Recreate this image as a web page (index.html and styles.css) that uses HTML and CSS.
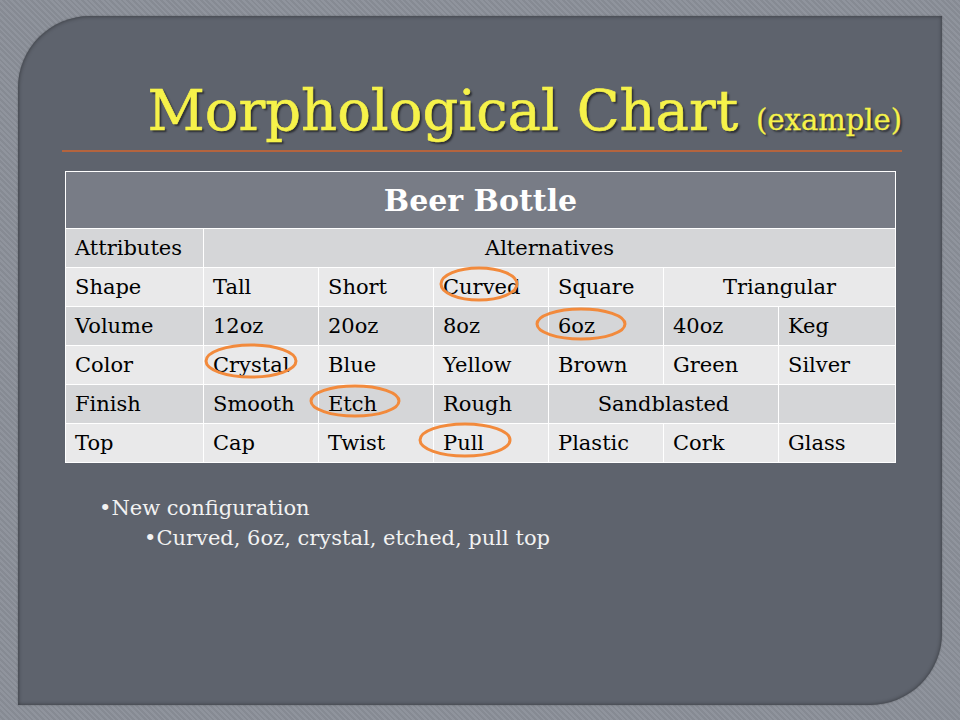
FILE: index.html
```html
<!DOCTYPE html>
<html>
<head>
<meta charset="utf-8">
<link rel="stylesheet" href="styles.css">
</head>
<body>
<div class="slide">
  <h1 class="title">Morphological Chart <span class="sub">(example)</span></h1>
  <div class="rule"></div>
  <div class="table-wrap">
    <table class="chart">
      <colgroup>
        <col class="c1"><col class="cn"><col class="cn"><col class="cn"><col class="cn"><col class="cn"><col class="cl">
      </colgroup>
      <tr class="head"><th colspan="7">Beer Bottle</th></tr>
      <tr class="dark"><td>Attributes</td><td colspan="6" class="center">Alternatives</td></tr>
      <tr class="light"><td>Shape</td><td>Tall</td><td>Short</td><td>Curved</td><td>Square</td><td colspan="2" class="center">Triangular</td></tr>
      <tr class="dark"><td>Volume</td><td>12oz</td><td>20oz</td><td>8oz</td><td>6oz</td><td>40oz</td><td>Keg</td></tr>
      <tr class="light"><td>Color</td><td>Crystal</td><td>Blue</td><td>Yellow</td><td>Brown</td><td>Green</td><td>Silver</td></tr>
      <tr class="dark"><td>Finish</td><td>Smooth</td><td>Etch</td><td>Rough</td><td colspan="2" class="center">Sandblasted</td><td></td></tr>
      <tr class="light"><td>Top</td><td>Cap</td><td>Twist</td><td>Pull</td><td>Plastic</td><td>Cork</td><td>Glass</td></tr>
    </table>
    <svg class="marks" width="830" height="290" viewBox="0 0 830 290">
      <g fill="none" stroke="#f28a3c" stroke-width="3">
        <ellipse cx="414" cy="113" rx="38" ry="16"/>
        <ellipse cx="516" cy="153" rx="44" ry="15"/>
        <ellipse cx="186" cy="190" rx="45" ry="16"/>
        <ellipse cx="290" cy="230" rx="44" ry="15"/>
        <ellipse cx="400" cy="269" rx="45" ry="16"/>
      </g>
    </svg>
  </div>
  <ul class="bullets">
    <li>•New configuration</li>
    <li class="lvl2">•Curved, 6oz, crystal, etched, pull top</li>
  </ul>
</div>
</body>
</html>
```
FILE: styles.css
```css
html, body {
  margin: 0;
  padding: 0;
}
body {
  width: 960px;
  height: 720px;
  background-color: #8b9099;
  background-image: repeating-linear-gradient(45deg, rgba(255,255,255,0.04) 0 2px, rgba(0,0,0,0.04) 2px 4px);
  overflow: hidden;
  font-family: "DejaVu Serif", "Liberation Serif", serif;
}
.slide {
  box-sizing: border-box;
  margin: 16px 18px 0 18px;
  width: 924px;
  height: 689px;
  background: #5e636d;
  border-radius: 72px 0 72px 0;
  box-shadow: inset 0 0 4px rgba(0,0,0,0.45), 0 0 2px rgba(0,0,0,0.3);
  padding: 62px 40px 0 44px;
  display: flex;
  flex-direction: column;
}
.title {
  margin: 0;
  text-align: right;
  font-weight: normal;
  font-size: 56px;
  line-height: 66px;
  color: #f6f24a;
  -webkit-text-stroke: 0.6px #f6f24a;
  text-shadow: 2px 2px 2px rgba(0,0,0,0.55);
  white-space: nowrap;
}
.title .sub {
  font-size: 29px;
  line-height: 1;
  -webkit-text-stroke: 0.3px #f6f24a;
}
.rule {
  margin-top: 6px;
  height: 2px;
  background: #b4643e;
}
.table-wrap {
  position: relative;
  margin: 19px 7px 0 3px;
  width: 830px;
}
.chart {
  border-collapse: collapse;
  width: 830px;
  table-layout: fixed;
  font-size: 21px;
  color: #000;
}
.chart col.c1 { width: 138px; }
.chart col.cn { width: 115px; }
.chart col.cl { width: 117px; }
.chart th, .chart td {
  border: 1px solid #ffffff;
  padding: 0 0 0 9px;
  text-align: left;
  white-space: nowrap;
  overflow: visible;
}
.chart .head th {
  height: 56px;
  background: #787c86;
  color: #ffffff;
  font-size: 30px;
  font-weight: bold;
  text-align: center;
  padding: 0;
}
.chart tr.dark td { background: #d5d6d8; height: 38px; }
.chart tr.light td { background: #e9e9ea; height: 38px; }
.chart td.center { text-align: center; padding: 0; }
.marks {
  position: absolute;
  left: 0;
  top: 0;
}
.bullets {
  list-style: none;
  margin: 30px 0 0 0;
  padding: 0 0 0 37px;
  color: #f2f2f2;
  font-size: 21px;
  line-height: 30px;
}
.bullets .lvl2 {
  padding-left: 45px;
}
```
